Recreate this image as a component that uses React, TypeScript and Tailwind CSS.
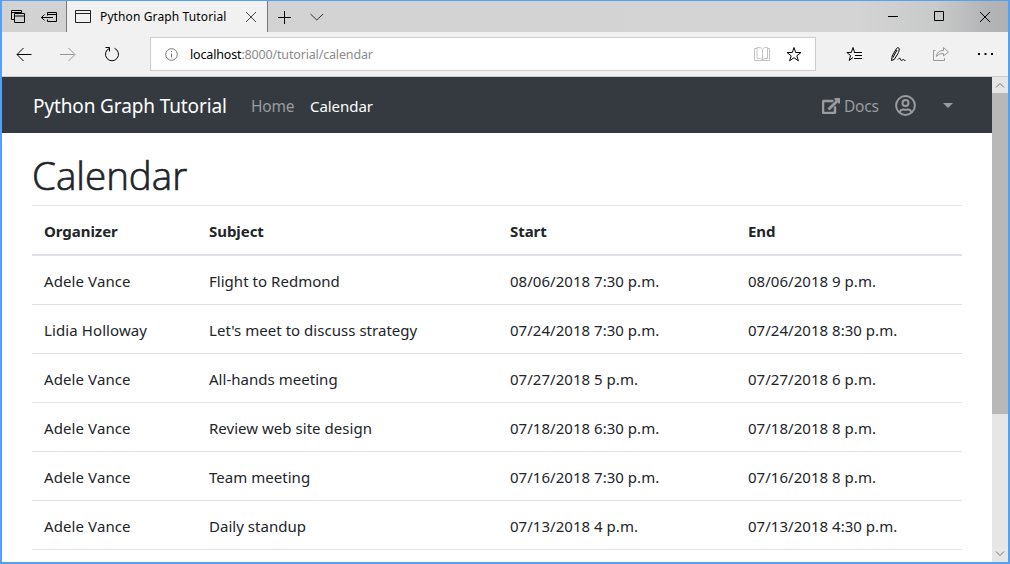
import type { ReactNode } from "react";

const events = [
  ["Adele Vance", "Flight to Redmond", "08/06/2018 7:30 p.m.", "08/06/2018 9 p.m."],
  ["Lidia Holloway", "Let's meet to discuss strategy", "07/24/2018 7:30 p.m.", "07/24/2018 8:30 p.m."],
  ["Adele Vance", "All-hands meeting", "07/27/2018 5 p.m.", "07/27/2018 6 p.m."],
  ["Adele Vance", "Review web site design", "07/18/2018 6:30 p.m.", "07/18/2018 8 p.m."],
  ["Adele Vance", "Team meeting", "07/16/2018 7:30 p.m.", "07/16/2018 8 p.m."],
  ["Adele Vance", "Daily standup", "07/13/2018 4 p.m.", "07/13/2018 4:30 p.m."],
];

function Icon({ className = "", w = 16, h = 16, children }: { className?: string; w?: number; h?: number; children: ReactNode }) {
  return (
    <svg className={`shrink-0 ${className}`} width={w} height={h} viewBox={`0 0 ${w} ${h}`} fill="none" stroke="currentColor">
      {children}
    </svg>
  );
}

function TitleBar() {
  return (
    <div className="flex h-[31px] shrink-0 items-stretch bg-[linear-gradient(to_right,#d2d2d2_0%,#d4d4d4_85%,#c8c9c9_93%,#b3b4b5_98%,#b0b1b2_100%)] text-black">
      <div className="flex w-16 items-center pl-[9px]">
        <Icon>
          <path d="M3 10.500H.5V1.500h10V4M.5 3.500h10M3.500 4.500h10v9h-10zM3.500 7h10" />
        </Icon>
        <Icon w={18} className="ml-[14px]">
          <path d="M6.500 6.500v-3h9v9h-9v-2M6.500 5.500h9M0 8.500h12M3.500 5.500l-3 3 3 3" />
        </Icon>
      </div>
      <div className="flex w-[202px] items-center border-x border-[#777] bg-[#f1f1f1]">
        <Icon w={17} className="ml-2 text-[#222]">
          <path d="M.5 1.500h15v12H.5zM.5 4.500h15" />
        </Icon>
        <span className="ml-2 w-[145px] whitespace-nowrap text-[12px] leading-4 tracking-[0.12px]">Python Graph Tutorial</span>
        <Icon w={12} h={12} className="text-[#444]">
          <path d="M1 1l10 10M11 1L1 11" />
        </Icon>
      </div>
      <div className="flex items-center pl-[10px]">
        <Icon w={14} h={14}>
          <path d="M0 7.500h13M6.500 1v13" />
        </Icon>
        <Icon w={14} h={8} className="ml-[18px] text-[#333]">
          <path d="M.5 1l6.300 6 6.300-6" />
        </Icon>
      </div>
      <div className="ml-auto flex items-center pr-[17px]">
        <Icon w={11} h={11}>
          <path d="M0 5.500h10" />
        </Icon>
        <Icon w={11} h={11} className="ml-[35px]">
          <path d="M.5.5h9v9h-9z" />
        </Icon>
        <Icon w={12} h={12} className="ml-[34px]">
          <path d="M1 1l10 10M11 1L1 11" />
        </Icon>
      </div>
    </div>
  );
}

function ToolBar() {
  return (
    <div className="flex h-[45px] shrink-0 items-center border-b border-[#ccc] bg-[#f1f1f1] text-black">
      <Icon className="ml-[14px]">
        <path d="M15.500 8.500H1M7.500 2L1 8.500 7.500 15" />
      </Icon>
      <Icon className="ml-[28px] text-[#999]">
        <path d="M0 8.500h14.500M8.500 2l6.500 6.500L8.500 15" />
      </Icon>
      <Icon className="ml-[28px]">
        <path d="M5.500 2.300A6.500 6.500 0 1 0 10.500 2.300M1.500 1.500h4V5.500" />
      </Icon>
      <div className="ml-[30px] flex h-[34px] w-[666px] items-center border border-[#ccc] bg-white">
        <Icon w={13} h={13} className="ml-[14px] text-[#777]">
          <circle cx="6.500" cy="6.500" r="5.800" />
          <path d="M6.500 5.500v4M6.500 3v1.200" />
        </Icon>
        <span className="ml-3 mt-px whitespace-nowrap text-[12.500px] leading-4 tracking-[-0.16px]">
          localhost<span className="text-[#8b8b8b]">:8000/tutorial/calendar</span>
        </span>
        <Icon w={17} className="ml-auto text-[#c2c2c2]">
          <path d="M8.500 3C7.500 1.500 5 1.500 3 1.500V12.500c2.500 0 4.500 0 5.500 1.500 1-1.500 3-1.500 5-1.500V1.500c-1.500 0-4 0-5 1.500zM8.500 3v11M3 2.500H.5v12h15v-12h-2" />
        </Icon>
        <Icon className="ml-[15px] mr-[13px]">
          <path d="M8 1.500l1.700 5h5.300l-4.200 3.300 1.600 5L8 11.700l-4.400 3.100 1.600-5L1 6.500h5.300z" />
        </Icon>
      </div>
      <Icon w={17} className="ml-[30px]">
        <path d="M7 11.500l-3.800 3 1.400-5L.8 6.500h4.500L7 1.500l1.600 5M8 6.500h8M9 9.500h7M8 12.500h8" />
      </Icon>
      <Icon w={17} className="ml-[27px]">
        <path d="M1.500 14.500l.7-4.500L6.500 2.500c.8-1.300 2.500-1 2.700.3.200 1.500-.5 3.200-1.400 5L4.200 13.500l-2.700 1M7 4L3 11.500M8 13.500c1-1.500 2.300-1.500 2.500-.3.200 1.600 1 1.600 2.200.6 1-.8 1.300.8 2.800.7" />
      </Icon>
      <Icon w={17} className="ml-[26px] text-[#999]">
        <path d="M2.500 4.500h-2v10h11V12M3.500 10.500c.3-4 2.500-6 7-6V1.500L15.500 6l-5 4V7.500c-3.500 0-5 .5-7 3z" />
      </Icon>
      <Icon w={16} h={4} className="ml-[28px]">
        <path d="M0 2h2M6.500 2h2M13 2h2" strokeWidth="2" />
      </Icon>
    </div>
  );
}

function NavBar() {
  return (
    <nav className="flex h-14 items-center bg-[#343a40] pl-[31px] pt-0.5 text-[#9a9c9f]">
      <span className="w-[218px] whitespace-nowrap text-[19px] leading-7 tracking-[-0.12px] text-white">Python Graph Tutorial</span>
      <span className="w-[59px] text-[15.500px] leading-6 tracking-[-0.2px]">Home</span>
      <span className="text-[15px] leading-6 tracking-[-0.05px] text-white">Calendar</span>
      <div className="ml-auto flex items-center pr-[39px]">
        <svg width="18" height="16" viewBox="0 0 576 512" fill="currentColor" stroke="currentColor" strokeWidth="16" className="mr-1">
          <path d="M576 24v127.984c0 21.461-25.960 31.980-40.971 16.971l-35.707-35.709-243.523 243.523c-9.373 9.373-24.568 9.373-33.941 0l-22.627-22.627c-9.373-9.373-9.373-24.569 0-33.941L442.756 76.676l-35.703-35.705C391.982 25.900 402.656 0 424.024 0H552c13.255 0 24 10.745 24 24zM407.029 270.794l-16 16A23.999 23.999 0 0 0 384 303.765V448H64V128h264a24.003 24.003 0 0 0 16.970-7.029l16-16C376.089 89.851 365.381 64 344 64H48C21.490 64 0 85.490 0 112v352c0 26.510 21.490 48 48 48h352c26.510 0 48-21.490 48-48V287.764c0-21.382-25.852-32.090-40.971-16.970z" />
        </svg>
        <span className="w-[51px] text-[15.500px] leading-6 tracking-[-0.2px]">Docs</span>
        <Icon w={21} h={21} className="mb-[2px]">
          <circle cx="10.500" cy="10.500" r="9.400" strokeWidth="2" />
          <circle cx="10.500" cy="8" r="3" strokeWidth="2" />
          <path d="M4.500 17c1-2 2.500-2.800 4-2.500 1.500.4 2.500.4 4 0 1.500-.3 3 .5 4 2.500" strokeWidth="2" />
        </Icon>
        <svg width="10" height="5" viewBox="0 0 10 5" fill="currentColor" className="ml-[27px] mb-[2px]">
          <path d="M0 0h10L5 5z" />
        </svg>
      </div>
    </nav>
  );
}

function Schedule() {
  return (
    <main className="px-[30px] pt-[19px] text-[#212529]">
      <h1 className="mb-[9px] h-11 font-['Open_Sans'] text-[38.500px] font-light leading-[46px] [-webkit-text-stroke:0.7px_#212529]">Calendar</h1>
      <table className="w-full table-fixed border-collapse text-left text-[15px] leading-6">
        <colgroup>
          <col className="w-[165px]" />
          <col className="w-[301px]" />
          <col className="w-[238px]" />
          <col />
        </colgroup>
        <thead>
          <tr className="h-[49px] border-t border-b-2 border-[#dee2e6]">
            {["Organizer", "Subject", "Start", "End"].map((name) => (
              <th key={name} className="px-3 pb-0 pt-[3px] font-bold tracking-[-0.05px]">{name}</th>
            ))}
          </tr>
        </thead>
        <tbody>
          {events.map((row) => (
            <tr key={row[2]} className="h-[49px] border-b border-[#dee2e6] first:h-[50px]">
              {row.map((cell, i) => (
                <td key={i} className="whitespace-nowrap px-3 pb-0 pt-0.5 tracking-[0.03px] first:tracking-[0.1px]">{cell}</td>
              ))}
            </tr>
          ))}
        </tbody>
      </table>
    </main>
  );
}

function ScrollBar() {
  return (
    <div className="flex w-4 shrink-0 flex-col bg-[#e6e6e6] text-[#777]">
      <Icon h={16}>
        <path d="M4 10.500l4-4 4 4" />
      </Icon>
      <div className="h-[321px] bg-[#b8b8b8]" />
      <Icon h={16} className="mt-auto">
        <path d="M4 5.500l4 4 4-4" />
      </Icon>
    </div>
  );
}

export default function App() {
  return (
    <div className="flex h-[564px] w-[1010px] flex-col overflow-hidden border-2 border-t border-[#559ff5] bg-white font-['Noto_Sans','Open_Sans',sans-serif]">
      <TitleBar />
      <ToolBar />
      <div className="flex min-h-0 flex-1">
        <div className="min-w-0 flex-1 overflow-hidden">
          <NavBar />
          <Schedule />
        </div>
        <ScrollBar />
      </div>
    </div>
  );
}
